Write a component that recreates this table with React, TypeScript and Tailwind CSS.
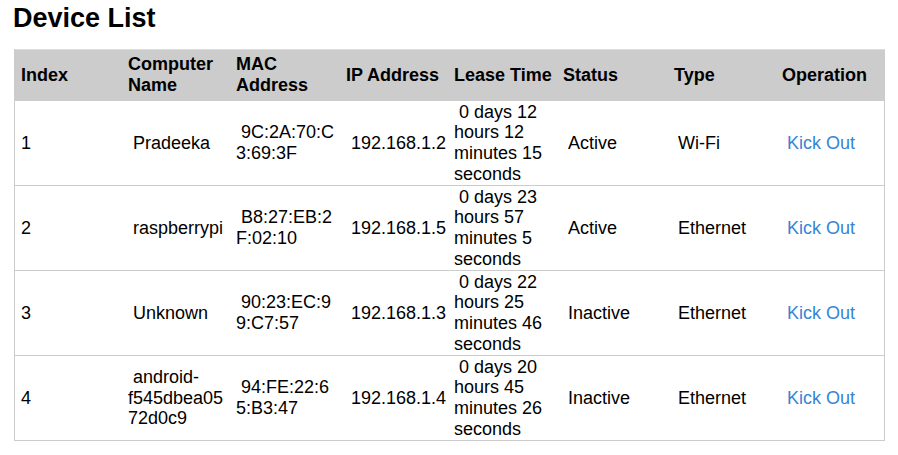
const devices = [
  { index: '1', name: 'Pradeeka', mac: '9C:2A:70:C3:69:3F', ip: '192.168.1.2', lease: '0 days 12 hours 12 minutes 15 seconds', status: 'Active', type: 'Wi-Fi' },
  { index: '2', name: 'raspberrypi', mac: 'B8:27:EB:2F:02:10', ip: '192.168.1.5', lease: '0 days 23 hours 57 minutes 5 seconds', status: 'Active', type: 'Ethernet' },
  { index: '3', name: 'Unknown', mac: '90:23:EC:99:C7:57', ip: '192.168.1.3', lease: '0 days 22 hours 25 minutes 46 seconds', status: 'Inactive', type: 'Ethernet' },
  { index: '4', name: 'android-f545dbea0572d0c9', mac: '94:FE:22:65:B3:47', ip: '192.168.1.4', lease: '0 days 20 hours 45 minutes 26 seconds', status: 'Inactive', type: 'Ethernet' }
]

const nb = '\u00a0'

export default function App() {
  return (
    <div className="bg-white text-black font-['Liberation_Sans',Arial,sans-serif] text-[18px] leading-[1.15] w-[898px] h-[455px]">
      <h2 className="text-[27px] font-bold leading-[31px] pt-[3px] pl-[13px] mb-[15px]">Device List</h2>

      <div className="ml-[14px] w-[871px] border border-[#ccc] border-t-[#ddd]">
        <table className="w-[869px] table-fixed border-separate border-spacing-0 text-left">
          <colgroup>
            <col className="w-[107px]" />
            <col className="w-[108px]" />
            <col className="w-[110px]" />
            <col className="w-[108px]" />
            <col className="w-[109px]" />
            <col className="w-[111px]" />
            <col className="w-[108px]" />
            <col className="w-[108px]" />
          </colgroup>
          <thead>
            <tr className="bg-[#ccc]">
              {['Index', 'Computer Name', 'MAC Address', 'IP Address', 'Lease Time', 'Status', 'Type', 'Operation'].map(h => (
                <th key={h} className="h-[50px] pl-[6px] pr-[2px] align-middle font-bold">
                  {h}
                </th>
              ))}
            </tr>
          </thead>
          <tbody>
            {devices.map(d => (
              <tr key={d.index}>
                <td className="h-[85px] border-t border-[#ccc] pl-[6px] pr-[2px] align-middle">{d.index}</td>
                <td className="h-[85px] border-t border-[#ccc] pl-[6px] pr-[2px] align-middle break-words">{nb + d.name}</td>
                <td className="h-[85px] border-t border-[#ccc] pl-[6px] pr-[2px] align-middle break-words">{nb + d.mac}</td>
                <td className="h-[85px] border-t border-[#ccc] pl-[6px] pr-[2px] align-middle">{nb + d.ip}</td>
                <td className="h-[85px] border-t border-[#ccc] pl-[6px] pr-[2px] align-middle">{nb + d.lease}</td>
                <td className="h-[85px] border-t border-[#ccc] pl-[6px] pr-[2px] align-middle">{nb + d.status}</td>
                <td className="h-[85px] border-t border-[#ccc] pl-[10px] pr-[2px] align-middle">{d.type}</td>
                <td className="h-[85px] border-t border-[#ccc] pl-[6px] pr-[2px] align-middle">
                  <a className="text-[#3585d5] no-underline cursor-pointer">{nb}Kick Out</a>
                </td>
              </tr>
            ))}
          </tbody>
        </table>
      </div>
    </div>
  )
}
